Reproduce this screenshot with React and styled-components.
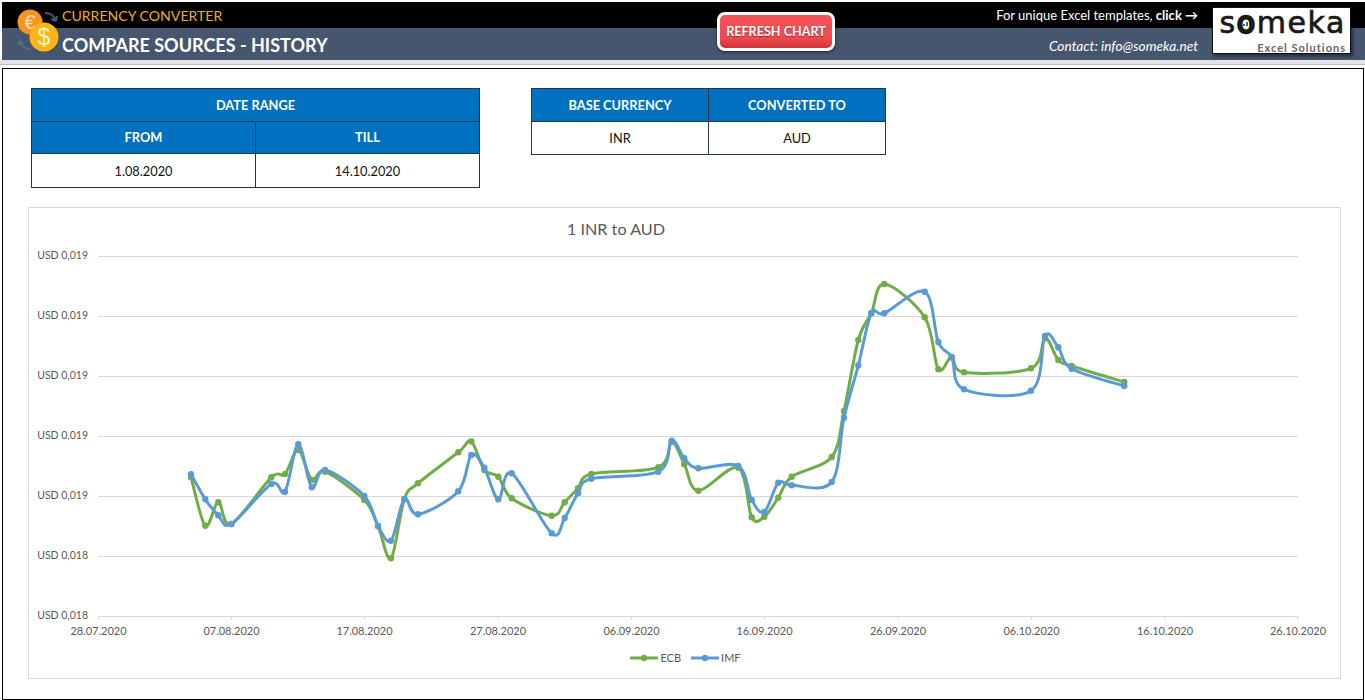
import React from 'react';
import styled, { createGlobalStyle } from 'styled-components';

const GlobalStyle = createGlobalStyle`
  html, body {
    margin: 0;
    padding: 0;
    background: #fff;
  }
  body {
    width: 1365px;
    height: 700px;
    overflow: hidden;
    font-family: Lato, 'Liberation Sans', sans-serif;
  }
`;

const Page = styled.div`
  width: 1365px;
  height: 700px;
  padding: 2px 0 0 2px;
  box-sizing: border-box;
`;

const Header = styled.header`
  position: relative;
  height: 58px;
  width: 1363px;
  display: flex;
  flex-direction: column;
`;

const TopBand = styled.div`
  height: 26px;
  background: #000;
  display: flex;
  align-items: center;
  justify-content: space-between;
  padding: 0 167px 0 60px;
`;

const BottomBand = styled.div`
  height: 32px;
  box-sizing: border-box;
  padding: 2px 167px 0 60px;
  background: #46566e;
  display: flex;
  align-items: center;
  justify-content: space-between;
`;

const AppName = styled.span`
  color: #edad1e;
  font-size: 14.1px;
`;

const PageName = styled.h1`
  margin: 0;
  color: #fff;
  font-size: 18px;
  font-weight: 700;
`;

const Promo = styled.span`
  color: #fff;
  font-size: 13px;
  b {
    font-weight: 700;
  }
`;

const Contact = styled.span`
  color: #fff;
  font-size: 13.7px;
  font-style: italic;
`;

const Coins = styled.svg`
  position: absolute;
  left: 12px;
  top: 6px;
`;

const RefreshButton = styled.button`
  position: absolute;
  left: 715px;
  top: 10px;
  width: 118px;
  height: 39px;
  box-sizing: border-box;
  border: 3px solid #fff;
  border-radius: 8px;
  background: linear-gradient(#f4555a, #f04a4e 70%, #c93338);
  box-shadow: 0 1px 3px rgba(0, 0, 0, 0.6);
  color: #fff;
  font-family: inherit;
  font-size: 12.6px;
  font-weight: 700;
  text-shadow: 0 1px 1px rgba(0, 0, 0, 0.4);
  padding: 0;
`;

const Logo = styled.div`
  position: absolute;
  left: 1210px;
  top: 5px;
  width: 139px;
  height: 47px;
  box-sizing: border-box;
  background: #fff;
  border: 1px solid #111;
  box-shadow: 2px 2px 3px rgba(0, 0, 0, 0.5);
  display: flex;
  flex-direction: column;
  align-items: flex-end;
  padding: 0 4px;
`;

const LogoWord = styled.span`
  font-family: 'DejaVu Sans', sans-serif;
  font-size: 30px;
  line-height: 33px;
  margin: -2px 0 2px;
  letter-spacing: 1.6px;
  color: #1a1a1a;
  -webkit-text-stroke: 0.7px #1a1a1a;
`;

const LogoO = styled.span`
  position: relative;
  -webkit-text-stroke: 2.4px #1a1a1a;
  svg {
    position: absolute;
    left: 6px;
    top: 14px;
  }
`;

const LogoSub = styled.span`
  font-size: 11px;
  line-height: 13px;
  font-weight: 700;
  letter-spacing: 1px;
  color: #666;
`;

const Rule = styled.div`
  height: 5px;
  margin-left: -2px;
  width: 1365px;
  background: linear-gradient(#e4e4e4 0 4px, #bdbdbd 4px);
`;

const Sheet = styled.main`
  margin-top: 3px;
  width: 1362px;
  height: 632px;
  box-sizing: border-box;
  border: 1px solid #000;
  padding: 19px 24px 0 28px;
`;

const Tables = styled.div`
  display: flex;
  gap: 51px;
  align-items: flex-start;
  height: 100px;
`;

const Table = styled.div`
  display: grid;
  width: ${(p) => p.$width}px;
  grid-template-columns: 1fr 1fr;
  grid-template-rows: ${(p) => p.$rows};
  box-sizing: border-box;
  border: 1px solid #24364a;
  border-width: 1px 0 0 1px;
`;

const Cell = styled.div`
  grid-column: ${(p) => (p.$wide ? '1 / 3' : 'auto')};
  display: flex;
  align-items: center;
  justify-content: center;
  box-sizing: border-box;
  border: 1px solid #24364a;
  border-width: 0 1px 1px 0;
  font-size: 12.8px;
  color: ${(p) => (p.$head ? '#fff' : '#111')};
  background: ${(p) => (p.$head ? '#0070c0' : '#fff')};
  font-weight: ${(p) => (p.$head ? 700 : 400)};
`;

const ChartCard = styled.section`
  margin: 19px 0 0 -3px;
  width: 1313px;
  height: 472px;
  box-sizing: border-box;
  border: 1px solid #d9d9d9;
  display: flex;
  flex-direction: column;
  align-items: center;
`;

const ChartTitle = styled.h2`
  margin: 10px 137px 0 0;
  height: 21px;
  line-height: 21px;
  font-size: 16.2px;
  font-weight: 400;
  color: #595959;
`;

const Plot = styled.svg`
  display: block;
  margin-top: 2px;
  text {
    font-family: Lato, 'Liberation Sans', sans-serif;
    font-size: ${(p) => p.$fontSize}px;
    fill: #595959;
  }
  .date {
    font-size: 11px;
  }
`;

const Legend = styled.div`
  display: flex;
  gap: 10px;
  margin: 10px 0 0 2px;
`;

const LegendItem = styled.div`
  display: flex;
  align-items: center;
  gap: 2px;
  font-size: 11px;
  color: #595959;
`;

const ecb = [
  [191, 477], [205.3, 525.7], [218.3, 502.3], [231.3, 524], [271.3, 477.3], [285, 474],
  [298.3, 450], [311.7, 480], [325, 471.7], [364.3, 500], [378, 526], [391, 558.3],
  [404.3, 499.3], [418, 483.3], [458.3, 452.3], [471.3, 441.5], [484.3, 470], [498.3, 476.7],
  [511.7, 498.3], [551.7, 515.7], [564.7, 502.3], [578, 488.3], [591.3, 474], [658.3, 467.3],
  [671.7, 441.7], [684.3, 464.3], [698.3, 490.7], [738.3, 467.7], [751.7, 517.3], [764.3, 516.7],
  [778.3, 497.7], [791.7, 476.7], [831.7, 457], [844, 411], [858.3, 340], [871.3, 313.3],
  [884.3, 284], [924.7, 317.3], [938.3, 369.3], [951.7, 357.3], [964, 372.3], [1031, 368.3],
  [1045, 338.3], [1058.3, 360], [1071.7, 366], [1124.3, 382],
];

const imf = [
  [191, 474.3], [205.3, 499.3], [218.3, 515.3], [231.3, 524], [271.3, 484], [285, 491.7],
  [298.3, 444.3], [311.7, 487.3], [325, 470], [364.3, 496], [378, 526], [391, 540.7],
  [404.3, 499.3], [418, 514.3], [458.3, 491.3], [471.3, 455], [484.3, 467.7], [498.3, 499.3],
  [511.7, 473.3], [551.7, 533.3], [564.7, 518], [578, 493.3], [591.3, 478.7], [658.3, 471.7],
  [671.7, 440.7], [684.3, 458.3], [698.3, 468.3], [738.3, 466], [751.7, 500], [764.3, 512],
  [778.3, 482.7], [791.7, 485.3], [831.7, 482], [844, 417.7], [858.3, 365.3], [871.3, 313.3],
  [884.3, 313.3], [924.7, 291.7], [938.3, 342], [951.7, 357.3], [964, 389.3], [1031, 390.7],
  [1045, 336], [1058.3, 347.3], [1071.7, 368.7], [1124.3, 386],
];

const gridY = [
  [256, 'USD 0,019'], [316, 'USD 0,019'], [376, 'USD 0,019'], [436, 'USD 0,019'],
  [496, 'USD 0,019'], [556, 'USD 0,018'], [616, 'USD 0,018'],
];

const ticks = [
  [98.5, '28.07.2020'], [231.5, '07.08.2020'], [364.5, '17.08.2020'], [498, '27.08.2020'],
  [631.5, '06.09.2020'], [764.5, '16.09.2020'], [898, '26.09.2020'], [1031.5, '06.10.2020'],
  [1165, '16.10.2020'], [1298, '26.10.2020'],
];

// same kind of smoothing excel does on a line chart
function smooth(pts) {
  let d = `M${pts[0][0]} ${pts[0][1]}`;
  for (let i = 0; i < pts.length - 1; i++) {
    const p0 = pts[i - 1] || pts[i];
    const p1 = pts[i];
    const p2 = pts[i + 1];
    const p3 = pts[i + 2] || p2;
    const c1x = p1[0] + (p2[0] - p0[0]) / 6;
    const c1y = p1[1] + (p2[1] - p0[1]) / 6;
    const c2x = p2[0] - (p3[0] - p1[0]) / 6;
    const c2y = p2[1] - (p3[1] - p1[1]) / 6;
    d += ` C${c1x} ${c1y} ${c2x} ${c2y} ${p2[0]} ${p2[1]}`;
  }
  return d;
}

function Series({ points, color }) {
  return (
    <g>
      <path d={smooth(points)} fill="none" stroke={color} strokeWidth="3" strokeLinecap="round" />
      {points.map(([x, y]) => (
        <circle key={x} cx={x} cy={y} r="3.2" fill={color} />
      ))}
    </g>
  );
}

function LegendKey({ color }) {
  return (
    <svg width="28" height="8" viewBox="0 0 28 8">
      <line x1="0" y1="4" x2="28" y2="4" stroke={color} strokeWidth="3" />
      <circle cx="14" cy="4" r="3.2" fill={color} />
    </svg>
  );
}

function CoinIcon() {
  return (
    <Coins width="50" height="52" viewBox="0 0 50 52">
      <path d="M31 5c5 0 9 2 11 8m0 0l1-5m-1 5l-5-2" fill="none" stroke="#46566e" strokeWidth="2" />
      <path d="M16 41c-5 0-9-3-11-8m0 0l-1 4m1-4l4 2" fill="none" stroke="#5a6a82" strokeWidth="2" />
      <circle cx="16" cy="14" r="12.5" fill="#f7931e" />
      <text x="16" y="21" textAnchor="middle" fontSize="20" fontFamily="Liberation Sans" fill="#fde3bd">€</text>
      <circle cx="30" cy="29" r="14.5" fill="#fdb515" />
      <text x="30" y="37" textAnchor="middle" fontSize="23" fontFamily="Liberation Sans" fill="#fff3d0">$</text>
    </Coins>
  );
}

export default function App() {
  return (
    <Page>
      <GlobalStyle />
      <Header>
        <TopBand>
          <AppName>CURRENCY CONVERTER</AppName>
          <Promo>For unique Excel templates, <b>click →</b></Promo>
        </TopBand>
        <BottomBand>
          <PageName>COMPARE SOURCES - HISTORY</PageName>
          <Contact>Contact: info@someka.net</Contact>
        </BottomBand>
        <CoinIcon />
        <RefreshButton>REFRESH CHART</RefreshButton>
        <Logo>
          <LogoWord>
            s
            <LogoO>
              o
              <svg width="8" height="8" viewBox="0 0 8 8">
                <path d="M1 7V5M4 7V3M7 7V1" stroke="#1a1a1a" strokeWidth="1.4" />
              </svg>
            </LogoO>
            meka
          </LogoWord>
          <LogoSub>Excel Solutions</LogoSub>
        </Logo>
      </Header>
      <Rule />
      <Sheet>
        <Tables>
          <Table $width={449} $rows="32.5px 32.5px 34px">
            <Cell $head $wide>DATE RANGE</Cell>
            <Cell $head>FROM</Cell>
            <Cell $head>TILL</Cell>
            <Cell>1.08.2020</Cell>
            <Cell>14.10.2020</Cell>
          </Table>
          <Table $width={355} $rows="32.5px 33px">
            <Cell $head>BASE CURRENCY</Cell>
            <Cell $head>CONVERTED TO</Cell>
            <Cell>INR</Cell>
            <Cell>AUD</Cell>
          </Table>
        </Tables>
        <ChartCard>
          <ChartTitle>1 INR to AUD</ChartTitle>
          <Plot $fontSize={10.5} width="1311" height="400" viewBox="29 241 1311 400">
            {gridY.map(([y, label]) => (
              <g key={y}>
                <line x1="98" x2="1298" y1={y + 0.5} y2={y + 0.5} stroke="#d9d9d9" />
                <text x="88" y={y + 3} textAnchor="end">{label}</text>
              </g>
            ))}
            {ticks.map(([x, label]) => (
              <g key={x}>
                <line x1={x} x2={x} y1="616" y2="620" stroke="#d9d9d9" />
                <text className="date" x={x} y="635" textAnchor="middle">{label}</text>
              </g>
            ))}
            <Series points={ecb} color="#70ad47" />
            <Series points={imf} color="#5b9bd5" />
          </Plot>
          <Legend>
            <LegendItem><LegendKey color="#70ad47" />ECB</LegendItem>
            <LegendItem><LegendKey color="#5b9bd5" />IMF</LegendItem>
          </Legend>
        </ChartCard>
      </Sheet>
    </Page>
  );
}
